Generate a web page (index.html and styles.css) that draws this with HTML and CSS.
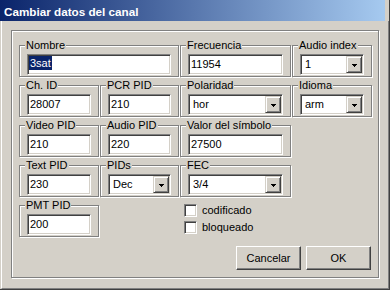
FILE: index.html
```html
<!DOCTYPE html>
<html>
    <head>
        <meta charset="utf-8">
        <title>Cambiar datos del canal</title>
        <link rel="stylesheet" href="styles.css">
    </head>
    <body>
        <div class="window">
            <div class="titlebar">
                <span class="title">Cambiar datos del canal</span>
            </div>
            <div class="client">
                <div class="panel">
                    <div class="fields">
                        <div class="group wide">
                            <span class="cap">Nombre</span>
                            <div class="edit"><span class="sel">3sat</span></div>
                        </div>
                        <div class="group">
                            <span class="cap">Frecuencia</span>
                            <div class="edit">11954</div>
                        </div>
                        <div class="group">
                            <span class="cap">Audio index</span>
                            <div class="combo">
                                <span class="val">1</span>
                                <span class="drop"><svg width="5" height="3" viewBox="0 0 5 3"><path d="M0 0h5v1H0zM1 1h3v1H1zM2 2h1v1H2z"/></svg></span>
                            </div>
                        </div>

                        <div class="group">
                            <span class="cap">Ch. ID</span>
                            <div class="edit">28007</div>
                        </div>
                        <div class="group">
                            <span class="cap">PCR PID</span>
                            <div class="edit">210</div>
                        </div>
                        <div class="group">
                            <span class="cap">Polaridad</span>
                            <div class="combo">
                                <span class="val">hor</span>
                                <span class="drop"><svg width="5" height="3" viewBox="0 0 5 3"><path d="M0 0h5v1H0zM1 1h3v1H1zM2 2h1v1H2z"/></svg></span>
                            </div>
                        </div>
                        <div class="group">
                            <span class="cap">Idioma</span>
                            <div class="combo">
                                <span class="val">arm</span>
                                <span class="drop"><svg width="5" height="3" viewBox="0 0 5 3"><path d="M0 0h5v1H0zM1 1h3v1H1zM2 2h1v1H2z"/></svg></span>
                            </div>
                        </div>

                        <div class="group">
                            <span class="cap">Video PID</span>
                            <div class="edit">210</div>
                        </div>
                        <div class="group">
                            <span class="cap">Audio PID</span>
                            <div class="edit">220</div>
                        </div>
                        <div class="group">
                            <span class="cap">Valor del símbolo</span>
                            <div class="edit">27500</div>
                        </div>

                        <div class="group first">
                            <span class="cap">Text PID</span>
                            <div class="edit">230</div>
                        </div>
                        <div class="group">
                            <span class="cap">PIDs</span>
                            <div class="combo">
                                <span class="val">Dec</span>
                                <span class="drop"><svg width="5" height="3" viewBox="0 0 5 3"><path d="M0 0h5v1H0zM1 1h3v1H1zM2 2h1v1H2z"/></svg></span>
                            </div>
                        </div>
                        <div class="group">
                            <span class="cap">FEC</span>
                            <div class="combo">
                                <span class="val">3/4</span>
                                <span class="drop"><svg width="5" height="3" viewBox="0 0 5 3"><path d="M0 0h5v1H0zM1 1h3v1H1zM2 2h1v1H2z"/></svg></span>
                            </div>
                        </div>

                        <div class="group first">
                            <span class="cap">PMT PID</span>
                            <div class="edit">200</div>
                        </div>
                        <div class="checks">
                            <label class="check"><span class="box"></span>codificado</label>
                            <label class="check"><span class="box"></span>bloqueado</label>
                        </div>
                    </div>
                    <div class="actions">
                        <span class="btn">Cancelar</span>
                        <span class="btn">OK</span>
                    </div>
                </div>
            </div>
        </div>
    </body>
</html>
```

FILE: styles.css
```css
body {
    margin: 0;
    background-color: #d4d0c8;
    font-family: "Liberation Sans", Arial, sans-serif;
    font-size: 11px;
    color: #000;
}
.window {
    width: 390px;
    height: 290px;
    box-sizing: border-box;
    display: flex;
    flex-direction: column;
    background-color: #d4d0c8;
    border-right: 1px solid #404040;
    border-bottom: 1px solid #404040;
}
.titlebar {
    height: 21px;
    margin-right: 4px;
    box-sizing: border-box;
    padding: 2px 0 0 4px;
    background: linear-gradient(to right, #0a246a, #a6caf0);
}
.title {
    color: #fff;
    font-weight: bold;
    font-size: 11.7px;
    line-height: 19px;
}
.client {
    flex: 1;
    margin-left: 1px;
    padding: 9px 0 0 9px;
    border-left: 1px solid #fff;
    border-right: 1px solid #808080;
    border-bottom: 1px solid #808080;
}
.panel {
    width: 368px;
    height: 248px;
    box-sizing: border-box;
    padding: 14px 7px 0 7px;
    border: 1px solid #808080;
    box-shadow: inset 1px 1px #fff, 1px 1px #fff;
}
.fields {
    display: grid;
    grid-template-columns: 80px 79px 111px 80px;
    grid-auto-rows: 32px;
    column-gap: 1px;
    row-gap: 8px;
}
.group {
    display: flex;
    flex-direction: column;
    box-sizing: border-box;
    padding: 0 7px;
    border: 1px solid #808080;
    box-shadow: inset 1px 1px #fff, 1px 1px #fff;
}
.group.wide {
    grid-column: span 2;
}
.group.first {
    grid-column-start: 1;
}
.cap {
    align-self: flex-start;
    margin: -7px 0 0 -2px;
    padding: 0 1px;
    line-height: 13px;
    background-color: #d4d0c8;
    white-space: nowrap;
}
.edit,
.combo {
    height: 21px;
    margin-top: 2px;
    box-sizing: border-box;
    border: 1px solid;
    border-color: #808080 #fff #fff #808080;
    box-shadow: inset 1px 1px #404040, inset -1px -1px #d4d0c8;
    background-color: #fff;
    line-height: 17px;
    white-space: nowrap;
}
.edit {
    padding: 1px 2px;
}
.sel {
    display: inline-block;
    margin-left: -1px;
    padding: 0 1px;
    line-height: 14px;
    vertical-align: 1px;
    background-color: #0a246a;
    color: #fff;
}
.combo {
    display: flex;
    padding: 1px;
}
.combo .val {
    flex: 1;
    padding-left: 3px;
}
.drop {
    width: 16px;
    height: 17px;
    box-sizing: border-box;
    display: flex;
    align-items: center;
    justify-content: center;
    border: 1px solid;
    border-color: #d4d0c8 #404040 #404040 #d4d0c8;
    box-shadow: inset 1px 1px #fff, inset -1px -1px #808080;
    background-color: #d4d0c8;
}
.drop svg {
    display: block;
    margin-top: 1px;
}
.checks {
    grid-column: 3 / 5;
    margin: -1px 0 0 4px;
    display: flex;
    flex-direction: column;
}
.check {
    height: 17px;
    display: flex;
    align-items: flex-start;
    gap: 5px;
    line-height: 13px;
}
.box {
    width: 13px;
    height: 13px;
    box-sizing: border-box;
    border: 1px solid;
    border-color: #808080 #fff #fff #808080;
    box-shadow: inset 1px 1px #404040, inset -1px -1px #d4d0c8;
    background-color: #fff;
}
.actions {
    display: flex;
    justify-content: flex-end;
    gap: 5px;
    margin-top: 9px;
}
.btn {
    width: 65px;
    height: 24px;
    box-sizing: border-box;
    display: flex;
    align-items: center;
    justify-content: center;
    border: 1px solid;
    border-color: #fff #404040 #404040 #fff;
    box-shadow: inset -1px -1px #808080;
    background-color: #d4d0c8;
}
```
